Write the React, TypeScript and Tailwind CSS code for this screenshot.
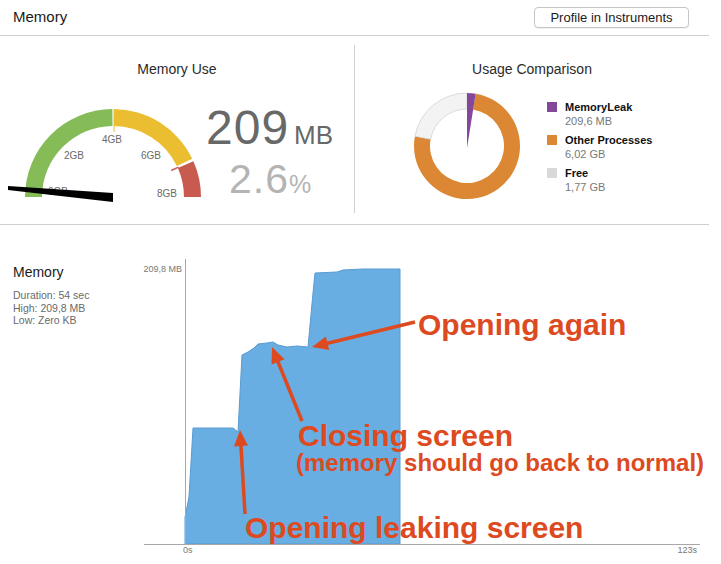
import React from 'react';

const FONT = { fontFamily: '"Liberation Sans", Arial, sans-serif' };

// gauge angle: 0 = left, 180 = right, passing over the top
const gp = (cx: number, cy: number, r: number, g: number) => {
  const a = (g * Math.PI) / 180;
  return [cx - r * Math.cos(a), cy - r * Math.sin(a)];
};

const gaugeArc = (cx: number, cy: number, r0: number, r1: number, g0: number, g1: number) => {
  const [ox0, oy0] = gp(cx, cy, r1, g0);
  const [ox1, oy1] = gp(cx, cy, r1, g1);
  const [ix1, iy1] = gp(cx, cy, r0, g1);
  const [ix0, iy0] = gp(cx, cy, r0, g0);
  return `M${ox0} ${oy0} A${r1} ${r1} 0 0 1 ${ox1} ${oy1} L${ix1} ${iy1} A${r0} ${r0} 0 0 0 ${ix0} ${iy0} Z`;
};

// donut angle: 0 = top, clockwise
const dp = (cx: number, cy: number, r: number, d: number) => {
  const a = (d * Math.PI) / 180;
  return [cx + r * Math.sin(a), cy - r * Math.cos(a)];
};

const ringArc = (cx: number, cy: number, r0: number, r1: number, d0: number, d1: number) => {
  const large = d1 - d0 > 180 ? 1 : 0;
  const [ox0, oy0] = dp(cx, cy, r1, d0);
  const [ox1, oy1] = dp(cx, cy, r1, d1);
  const [ix1, iy1] = dp(cx, cy, r0, d1);
  const [ix0, iy0] = dp(cx, cy, r0, d0);
  return `M${ox0} ${oy0} A${r1} ${r1} 0 ${large} 1 ${ox1} ${oy1} L${ix1} ${iy1} A${r0} ${r0} 0 ${large} 0 ${ix0} ${iy0} Z`;
};

function Gauge() {
  const cx = 113;
  const cy = 97;
  const labels = [
    { t: '0GB', x: 58, y: 95 },
    { t: '2GB', x: 74, y: 59 },
    { t: '4GB', x: 112, y: 43 },
    { t: '6GB', x: 151, y: 59 },
    { t: '8GB', x: 167, y: 97 },
  ];
  const [t1x, t1y] = gp(cx, cy, 64, 155.5);
  const [t2x, t2y] = gp(cx, cy, 72, 155.5);
  return (
    <svg width="205" height="108" viewBox="0 0 205 108" className="shrink-0">
      <path d={gaugeArc(cx, cy, 71, 88, 0, 89.6)} fill="#85bc57" />
      <path d={gaugeArc(cx, cy, 71, 88, 90.4, 154.2)} fill="#ebbd31" />
      <path d={gaugeArc(cx, cy, 71, 88, 156, 180)} fill="#c85a4f" />
      <line x1={cx + 1} y1={cy - 71} x2={cx + 1} y2={cy - 65} stroke="#ebbd31" strokeWidth="1" />
      <line x1={t1x} y1={t1y} x2={t2x} y2={t2y} stroke="#c85a4f" strokeWidth="1.5" />
      {labels.map(l => (
        <text key={l.t} x={l.x} y={l.y} textAnchor="middle" fontSize="10" fill="#6a6a6a" style={FONT}>
          {l.t}
        </text>
      ))}
      <polygon points="8,86 113,93 113,102 8,90" fill="#000" />
    </svg>
  );
}

function Donut() {
  const cx = 57;
  const cy = 56;
  const [px, py] = dp(cx, cy, 53, 9.4);
  return (
    <svg width="115" height="112" viewBox="0 0 115 112" className="shrink-0">
      <path d={ringArc(cx, cy, 37, 53, 9.4, 280.6)} fill="#db8733" />
      <path d={ringArc(cx, cy, 37, 53, 280.6, 360)} fill="#f3f3f3" stroke="#d2d2d2" strokeWidth="0.8" />
      <path d={`M${cx} ${cy + 2} L${cx} ${cy - 53} A53 53 0 0 1 ${px} ${py} Z`} fill="#84479a" />
    </svg>
  );
}

const legend = [
  { name: 'MemoryLeak', value: '209,6 MB', color: 'bg-[#84479a]' },
  { name: 'Other Processes', value: '6,02 GB', color: 'bg-[#db8733]' },
  { name: 'Free', value: '1,77 GB', color: 'bg-[#d8d8d8]' },
];

const arrow = (x1: number, y1: number, x2: number, y2: number) => {
  const dx = x2 - x1;
  const dy = y2 - y1;
  const len = Math.sqrt(dx * dx + dy * dy);
  const ux = dx / len;
  const uy = dy / len;
  const bx = x2 - ux * 16;
  const by = y2 - uy * 16;
  const nx = -uy * 7;
  const ny = ux * 7;
  return (
    <g key={`${x1}-${y1}`}>
      <line x1={x1} y1={y1} x2={bx + ux * 2} y2={by + uy * 2} stroke="#dd4a1f" strokeWidth="3.5" />
      <polygon points={`${x2},${y2} ${bx + nx},${by + ny} ${bx - nx},${by - ny}`} fill="#dd4a1f" />
    </g>
  );
};

const areaPoints = [
  [185, 544], [185, 517], [189, 497], [193, 428], [233, 428], [238, 432], [242, 355],
  [248, 352], [254, 348], [258, 344], [267, 343], [273, 342], [278, 345], [287, 347],
  [297, 346], [308, 347], [313, 293], [315, 273], [337, 272], [343, 270], [363, 269],
  [400, 269], [400, 544],
];

function Chart() {
  return (
    <div className="relative flex-1 h-[339px]">
      <svg width="591" height="339" viewBox="130 225 591 339" className="block">
        <path d={`M${areaPoints.map(p => p.join(' ')).join(' L')} Z`} fill="#68aee3" stroke="#5a9bd0" strokeWidth="1" />
        <line x1="185.5" y1="259" x2="185.5" y2="544" stroke="#a8a8a8" strokeWidth="1" />
        <line x1="144" y1="544.5" x2="700" y2="544.5" stroke="#a8a8a8" strokeWidth="1" />
        <text x="182" y="272" textAnchor="end" fontSize="9" fill="#777" style={FONT}>209,8 MB</text>
        <text x="183" y="553" fontSize="9" fill="#777" style={FONT}>0s</text>
        <text x="697" y="553" textAnchor="end" fontSize="9" fill="#777" style={FONT}>123s</text>
        {arrow(415, 322, 312, 347)}
        {arrow(302, 421, 272, 347)}
        {arrow(245, 514, 240, 430)}
      </svg>
      <div className="absolute left-[288px] top-[85px] text-[30px] leading-none font-bold text-[#dd4a1f] whitespace-nowrap">Opening again</div>
      <div className="absolute left-[168px] top-[196px] text-[30px] leading-none font-bold text-[#dd4a1f] whitespace-nowrap">Closing screen</div>
      <div className="absolute left-[166px] top-[226px] text-[24px] leading-none font-bold text-[#dd4a1f] whitespace-nowrap">(memory should go back to normal)</div>
      <div className="absolute left-[115px] top-[288px] text-[30px] leading-none font-bold text-[#dd4a1f] whitespace-nowrap">Opening leaking screen</div>
    </div>
  );
}

export default function App() {
  return (
    <div className="w-[721px] h-[564px] bg-white overflow-hidden" style={FONT}>
      {/* Header */}
      <div className="w-[709px] h-[36px] border-b border-[#cfcfcf] flex items-center justify-between pl-[13px] pr-[20px]">
        <span className="text-[15px] text-[#1a1a1a]">Memory</span>
        <button className="h-[21px] w-[155px] border border-[#c6c6c6] rounded-[4px] bg-white text-[13px] text-[#1a1a1a] shadow-[0_1px_0_rgba(0,0,0,0.05)] mt-[-1px]">
          Profile in Instruments
        </button>
      </div>

      {/* Top panels */}
      <div className="w-[709px] h-[189px] border-b border-[#cfcfcf] flex">
        <div className="w-[354px] flex flex-col">
          <div className="pt-[25px] text-center text-[14px] leading-[16px] text-[#2a2a2a]">Memory Use</div>
          <div className="flex mt-[23px]">
            <Gauge />
            <div className="flex flex-col pt-[4px] pl-[1px]">
              <div className="flex items-baseline text-[#686868] leading-none">
                <span className="text-[48px] leading-none tracking-[1px]">209</span>
                <span className="text-[26px] leading-none ml-[5px]">MB</span>
              </div>
              <div className="flex items-baseline text-[#b4b4b4] leading-none mt-[7px] ml-[23px]">
                <span className="text-[41px] leading-none tracking-[1px]">2.6</span>
                <span className="text-[25px] leading-none">%</span>
              </div>
            </div>
          </div>
        </div>
        <div className="w-px bg-[#cfcfcf] mt-[9px] mb-[11px]" />
        <div className="flex-1 flex flex-col">
          <div className="pt-[25px] text-center text-[14px] leading-[16px] text-[#2a2a2a]">Usage Comparison</div>
          <div className="flex mt-[13px] pl-[55px]">
            <Donut />
            <div className="ml-[22px] mt-[10px] flex flex-col gap-[5px]">
              {legend.map(l => (
                <div key={l.name} className="flex">
                  <div className={`w-[10px] h-[10px] mt-[2px] ${l.color}`} />
                  <div className="ml-[8px] flex flex-col">
                    <span className="text-[11px] leading-[14px] font-bold text-[#111]">{l.name}</span>
                    <span className="text-[11px] leading-[14px] text-[#777]">{l.value}</span>
                  </div>
                </div>
              ))}
            </div>
          </div>
        </div>
      </div>

      {/* Timeline */}
      <div className="flex">
        <div className="w-[130px] pl-[13px] pt-[38px] shrink-0">
          <div className="text-[14px] leading-[18px] text-[#1a1a1a]">Memory</div>
          <div className="mt-[8px] text-[10.5px] leading-[12.5px] text-[#6a6a6a]">
            <div>Duration: 54 sec</div>
            <div>High: 209,8 MB</div>
            <div>Low: Zero KB</div>
          </div>
        </div>
        <Chart />
      </div>
    </div>
  );
}
